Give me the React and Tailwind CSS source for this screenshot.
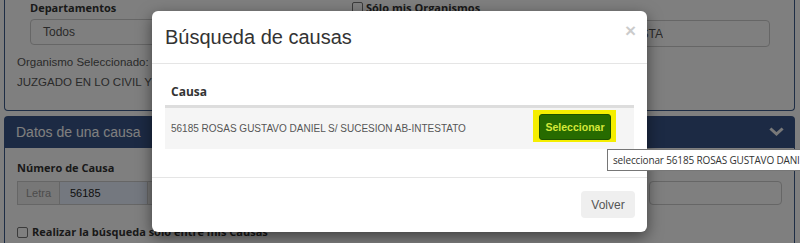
import React from "react";

const Checkbox = () => (
  <span className="inline-block w-[11px] h-[11px] border border-[#767676] rounded-[2px] bg-white shrink-0" />
);

const ChevronDown = () => (
  <svg width="15" height="10" viewBox="0 0 15 10" fill="none">
    <polyline points="2.5,2.5 7.5,7 12.5,2.5" stroke="#f0f0f0" strokeWidth="3" strokeLinecap="square" />
  </svg>
);

const App = () => {
  return (
    <div className="relative w-[800px] h-[243px] overflow-hidden bg-white font-['Liberation_Sans',Arial,sans-serif] text-[#333]">
      {/* page under the modal */}
      <div className="pl-[4px] pr-[5px]">
        {/* Organismos panel */}
        <div className="h-[111px] border-x border-b border-[#3c5a8a] rounded-b-[4px] px-[12px]">
          <div className="flex h-[47px]">
            <div className="w-[335px] pl-[13px] pr-[15px]">
              <div className="h-[15px] leading-[15px] text-[11px] font-bold font-['Open_Sans',sans-serif]">Departamentos</div>
              <div className="mt-[4px] h-[26px] border border-[#ccc] rounded-[4px] flex items-center pl-[12px] text-[12px] text-[#555]">
                Todos
              </div>
            </div>
            <div className="w-[418px]">
              <div className="h-[15px] flex items-center gap-[3px]">
                <Checkbox />
                <span className="text-[11px] font-bold font-['Open_Sans',sans-serif] leading-[15px]">Sólo mis Organismos</span>
              </div>
              <div className="mt-[5px] h-[27px] border border-[#ccc] rounded-[4px] flex items-center text-[12px] text-[#555]">
                <span className="w-[310px] text-right whitespace-nowrap overflow-hidden">SELECCIONE DE LA LISTA</span>
              </div>
            </div>
          </div>
          <div className="mt-[7px] h-[16px] leading-[16px] text-[11.5px] text-[#555]">Organismo Seleccionado:</div>
          <div className="mt-[4px] h-[16px] leading-[16px] text-[11.5px] text-[#555] whitespace-nowrap">
            JUZGADO EN LO CIVIL Y COMERCIAL N° 1
          </div>
        </div>

        {/* Datos de una causa panel */}
        <div className="mt-[5px]">
          <div className="h-[32px] bg-[#385488] rounded-t-[4px] flex items-center justify-between pl-[12px] pr-[11px]">
            <span className="text-[14px] text-white">Datos de una causa</span>
            <ChevronDown />
          </div>
          <div className="border-x border-[#3c5a8a] px-[12px] pt-[12px] h-[100px]">
            <div className="h-[16px] leading-[16px] text-[11px] font-bold font-['Open_Sans',sans-serif]">Número de Causa</div>
            <div className="mt-[5px] flex justify-between">
              <div className="flex h-[24px] text-[11px]">
                <div className="w-[43px] bg-[#eee] border border-[#ccc] flex items-center justify-center text-[#999]">Letra</div>
                <div className="w-[87px] bg-[#e8f0fe] border-y border-[#ccc] flex items-center pl-[10px] text-[#222]">56185</div>
                <div className="w-[60px] bg-[#eee] border border-[#ccc]" />
                <div className="w-[150px] border-y border-r border-[#ccc]" />
              </div>
              <div className="w-[133px] h-[24px] border border-[#ccc] rounded-[4px]" />
            </div>
            <div className="mt-[19px] h-[16px] flex items-center gap-[4px]">
              <Checkbox />
              <span className="text-[11px] font-bold font-['Open_Sans',sans-serif]">Realizar la búsqueda solo entre mis Causas</span>
            </div>
          </div>
        </div>
      </div>

      {/* backdrop */}
      <div className="absolute inset-0 bg-black/50" />

      {/* modal */}
      <div className="absolute left-[152px] top-[11px] w-[495px] h-[221px] bg-white rounded-[6px] shadow-[0_5px_15px_rgba(0,0,0,0.5)] flex flex-col">
        <div className="h-[53px] shrink-0 border-b border-[#e5e5e5] flex items-center justify-between pl-[13px] pr-[11px]">
          <h4 className="text-[20px] leading-[22px] text-[#333]">Búsqueda de causas</h4>
          <span className="mb-[14px] text-[19px] leading-[21px] font-bold text-black opacity-20">×</span>
        </div>
        <div className="h-[113px] shrink-0 px-[13px] pt-[15px]">
          <div className="h-[28px] border-b-2 border-[#ddd] flex items-center pl-[6px]">
            <span className="text-[12px] font-bold font-['Open_Sans',sans-serif] text-[#333]">Causa</span>
          </div>
          <div className="h-[42px] border-t border-[#ddd] bg-[#f5f5f5] flex items-center justify-between pl-[6px] pr-[18px]">
            <span className="text-[10px] text-[#555]">56185 ROSAS GUSTAVO DANIEL S/ SUCESION AB-INTESTATO</span>
            <div className="mb-[5px] bg-[#f5ee00] pl-[6px] pr-[5px] pt-[4px] pb-[2px]">
              <button className="w-[72px] h-[26px] bg-[#276b00] border border-[#1d5200] rounded-[3px] text-[10.5px] font-bold text-[#d4e83a]">
                Seleccionar
              </button>
            </div>
          </div>
        </div>
        <div className="flex-1 border-t border-[#e5e5e5] flex justify-end items-start pt-[13px] pr-[12px]">
          <button className="w-[54px] h-[27px] bg-[#efefef] rounded-[4px] text-[12px] text-[#555]">Volver</button>
        </div>
      </div>

      {/* tooltip */}
      <div className="absolute left-[607px] top-[149px] h-[22px] border border-[#767676] bg-white px-[5px] flex items-center whitespace-nowrap text-[10px] tracking-[-0.15px] text-[#333] font-['Open_Sans',sans-serif]">
        seleccionar 56185 ROSAS GUSTAVO DANIEL S/ SUCESION AB-INTESTATO
      </div>
    </div>
  );
};

export default App;
